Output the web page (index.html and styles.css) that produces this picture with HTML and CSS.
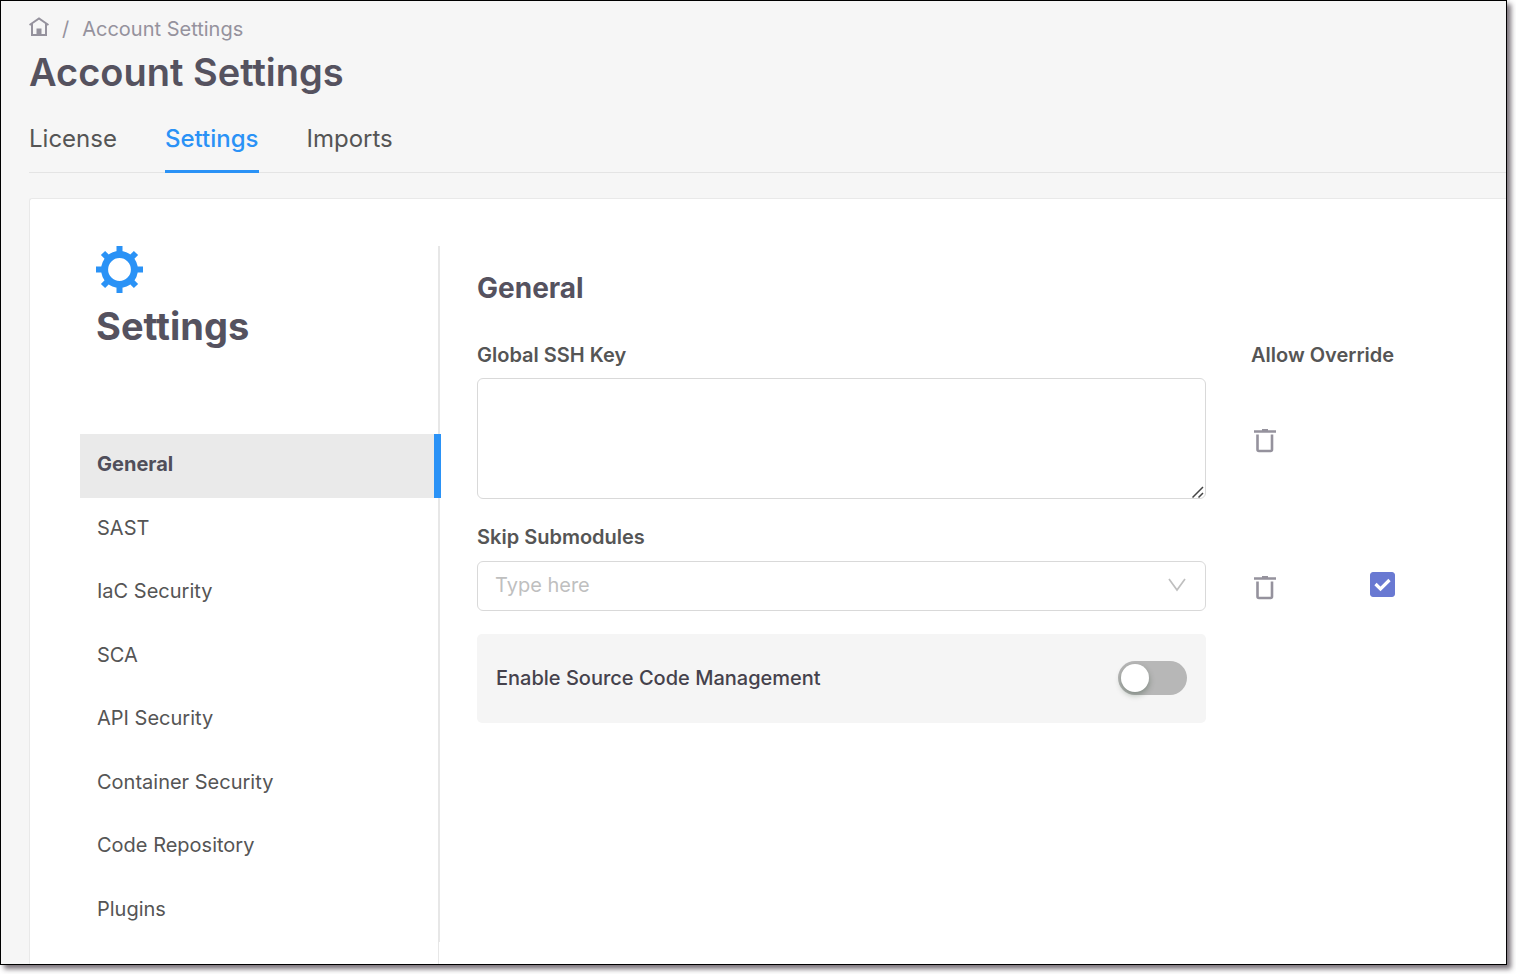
FILE: index.html
```html
<!DOCTYPE html>
<html lang="en">
<head>
<meta charset="utf-8">
<meta name="viewport" content="width=device-width, initial-scale=1">
<title>Account Settings</title>
<link rel="stylesheet" href="styles.css">
</head>
<body>
<div class="window">
  <header class="page-header">
    <nav class="breadcrumb" aria-label="Breadcrumb">
      <a class="home" href="#" aria-label="Home">
        <svg viewBox="0 0 20 20" width="20" height="20" fill="none" stroke="currentColor" stroke-width="2"><path d="M.5 8 10 1.500 19.500 8M3 6.800V18H17V6.800"/><path d="M7.500 18V11.500H12.500V18Z" fill="currentColor" stroke="none"/></svg>
      </a>
      <span>/</span>
      <a href="#">Account Settings</a>
    </nav>
    <h1 class="page-title">Account Settings</h1>
    <nav class="tabs" aria-label="Account">
      <a class="tab" href="#">License</a>
      <a class="tab tab-active" href="#" aria-current="page">Settings</a>
      <a class="tab" href="#">Imports</a>
    </nav>
  </header>
  <main class="panel">
    <aside class="sidebar">
      <div class="sidebar-main">
        <svg class="gear" viewBox="0 0 47 47" width="47" height="47" fill="none" stroke="#2a92f6"><circle cx="23.500" cy="23.500" r="14.900" stroke-width="7"/><path stroke-width="6" d="M23.500 0V8M23.500 39V47M0 23.500H8M39 23.500H47M7 7 13 13M34 34 40 40M40 7 34 13M13 34 7 40"/></svg>
        <h2 class="sidebar-title">Settings</h2>
        <nav class="side-nav" aria-label="Settings sections">
          <a class="side-link side-link-active" href="#" aria-current="page">General</a>
          <a class="side-link" href="#">SAST</a>
          <a class="side-link" href="#">IaC Security</a>
          <a class="side-link" href="#">SCA</a>
          <a class="side-link" href="#">API Security</a>
          <a class="side-link" href="#">Container Security</a>
          <a class="side-link" href="#">Code Repository</a>
          <a class="side-link" href="#">Plugins</a>
        </nav>
      </div>
      <div class="sidebar-rest"></div>
    </aside>
    <form class="content">
      <h2 class="section-title">General</h2>
      <div class="row">
        <label class="label" for="ssh-key">Global SSH Key</label>
        <span class="label" id="override-label">Allow Override</span>
      </div>
      <div class="row row-key">
        <div class="key-wrap">
          <textarea class="field key-field" id="ssh-key"></textarea>
          <svg class="grip" viewBox="0 0 12 12" width="12" height="12" fill="none" stroke="#444" stroke-width="1.500"><path d="M.5 11.500 11 1M6.500 11.500 11 7"/></svg>
        </div>
        <div class="actions">
          <button class="trash" type="button" aria-label="Clear Global SSH Key">
            <svg viewBox="0 0 22 24" width="22" height="24" fill="none" stroke="currentColor"><path stroke-width="2.600" d="M0 2.500H22M8 1.300H14"/><path stroke-width="2.600" d="M3.500 5.500V20.500Q3.500 22 5 22H16.500Q18 22 18 20.500V5.500"/></svg>
          </button>
        </div>
      </div>
      <label class="label skip-label" for="skip">Skip Submodules</label>
      <div class="row">
        <div class="select-wrap">
          <select class="field skip-field" id="skip">
            <option value="">Type here</option>
          </select>
          <svg class="chevron" viewBox="0 0 18 14" width="18" height="14" fill="none" stroke="#bfbfbf" stroke-width="1.700"><path d="M1 1 9 12 17 1"/></svg>
        </div>
        <div class="actions">
          <button class="trash" type="button" aria-label="Clear Skip Submodules">
            <svg viewBox="0 0 22 24" width="22" height="24" fill="none" stroke="currentColor"><path stroke-width="2.600" d="M0 2.500H22M8 1.300H14"/><path stroke-width="2.600" d="M3.500 5.500V20.500Q3.500 22 5 22H16.500Q18 22 18 20.500V5.500"/></svg>
          </button>
          <span class="check">
            <input class="check-input" type="checkbox" checked aria-labelledby="override-label">
            <svg class="check-mark" viewBox="0 0 25 25" width="25" height="25" fill="none" stroke="#fff" stroke-width="3.200"><path d="M5.500 12 10.500 17 19.500 8"/></svg>
          </span>
        </div>
      </div>
      <div class="row row-scm">
        <div class="scm">
          <label for="scm">Enable Source Code Management</label>
          <input class="switch" id="scm" type="checkbox" role="switch">
        </div>
      </div>
    </form>
  </main>
</div>
</body>
</html>
```
FILE: styles.css
```css
* { box-sizing: border-box; }

body {
  margin: 0;
  min-height: 100vh;
  display: flex;
  padding: 0 9px 9px 0;
  background: #fff;
  color: #555;
  font-family: Inter, "Liberation Sans", sans-serif;
  font-size: 20px;
  line-height: 24px;
}

a { color: inherit; text-decoration: none; }
h1, h2 { margin: 0; color: #55525f; }
svg { display: block; }

.window {
  flex: 1;
  display: flex;
  flex-direction: column;
  border: 1px solid #000;
  background: #f6f6f6;
  box-shadow: 4px 4px 5px rgba(50, 40, 50, .65);
}

.page-header { padding: 16px 0 0 28px; }

.breadcrumb {
  display: flex;
  gap: 13px;
  color: #95929d;
}

.page-title {
  margin-top: 7px;
  font-size: 38px;
  font-weight: 600;
  line-height: 48px;
}

.tabs {
  display: flex;
  gap: 48px;
  margin-top: 27px;
  border-bottom: 1px solid #e4e4e4;
  font-size: 24px;
  line-height: 32px;
}

.tab {
  padding-bottom: 15px;
  margin-bottom: -1px;
  border-bottom: 3px solid transparent;
}

.tab-active { color: #2a92f6; border-color: #2a92f6; font-weight: 500; }

.panel {
  flex: 1;
  display: flex;
  margin: 25px 0 0 28px;
  border: 1px solid #e9e9e9;
  border-width: 1px 0 0 1px;
  border-top-left-radius: 3px;
  background: #fff;
}

.sidebar {
  flex: none;
  display: flex;
  flex-direction: column;
  width: 410px;
  padding: 47px 0 0 50px;
}

.sidebar-main { border-right: 2px solid #e7e7e7; }

.sidebar-rest {
  flex: 1;
  margin-right: 1px;
  border-right: 1px solid #e7e7e7;
}

.gear { margin-left: 16px; }

.sidebar-title {
  margin: 9px 0 0 16px;
  font-size: 38px;
  font-weight: 700;
  line-height: 48px;
}

.side-nav {
  display: grid;
  grid-auto-rows: 1fr;
  height: 508px;
  margin: 84px -3px 0 0;
}

.side-link {
  display: flex;
  align-items: center;
  padding: 0 17px 3px;
}

.side-link-active {
  border-right: 7px solid #2a92f6;
  background: #eaeaea;
  color: #504e5a;
  font-weight: 700;
}

.content {
  flex: 1;
  padding: 71px 111px 0 37px;
}

.section-title {
  font-size: 28px;
  font-weight: 700;
  line-height: 36px;
}

.row {
  display: grid;
  grid-template-columns: 1fr 144px;
  gap: 45px;
  align-items: center;
}

.section-title + .row { margin-top: 37px; }

.label { font-weight: 600; white-space: nowrap; }

.row-key { margin-top: 11px; }

.key-wrap, .select-wrap, .check { position: relative; }

.field {
  display: block;
  width: 100%;
  border: 1px solid #d9d9d9;
  border-radius: 6px;
  background: #fff;
  font: inherit;
}

.key-field { height: 121px; padding: 12px 18px; resize: vertical; }
.key-field::-webkit-resizer { background: transparent; }

.grip {
  position: absolute;
  right: 2px;
  bottom: 1px;
  pointer-events: none;
}

.actions {
  display: flex;
  align-items: flex-start;
  justify-content: space-between;
  padding-left: 3px;
}

.trash {
  padding: 4px 0 0;
  border: 0;
  background: none;
  color: #95929d;
  cursor: pointer;
}

.skip-label { display: block; margin: 26px 0 12px; }

.skip-field {
  height: 50px;
  padding: 0 17px 2px;
  appearance: none;
  color: #bfbfbf;
}

.chevron {
  position: absolute;
  top: 17px;
  right: 20px;
  pointer-events: none;
}

.check-input {
  display: block;
  width: 25px;
  height: 25px;
  margin: 0;
  appearance: none;
  border-radius: 3px;
  background: #fff;
  border: 1px solid #d9d9d9;
}

.check-input:checked { background: #6979d2; border-color: #6979d2; }

.check-mark {
  position: absolute;
  inset: 0;
  pointer-events: none;
}

.check-input:not(:checked) + .check-mark { display: none; }

.row-scm { margin-top: 23px; }

.scm {
  display: flex;
  align-items: center;
  justify-content: space-between;
  height: 89px;
  padding: 0 19px 1px;
  border-radius: 5px;
  background: #f5f5f5;
  font-weight: 500;
  color: #45424c;
}

.switch {
  display: flex;
  align-items: center;
  width: 69px;
  height: 34px;
  margin: 0;
  padding: 0 3px;
  appearance: none;
  border-radius: 17px;
  background: #b7b7b7;
}

.switch::before {
  content: "";
  width: 28px;
  height: 28px;
  border-radius: 50%;
  background: #fff;
  box-shadow: 0 3px 6px rgba(0, 35, 11, .3);
}

.switch:checked { justify-content: flex-end; background: #2a92f6; }
```
